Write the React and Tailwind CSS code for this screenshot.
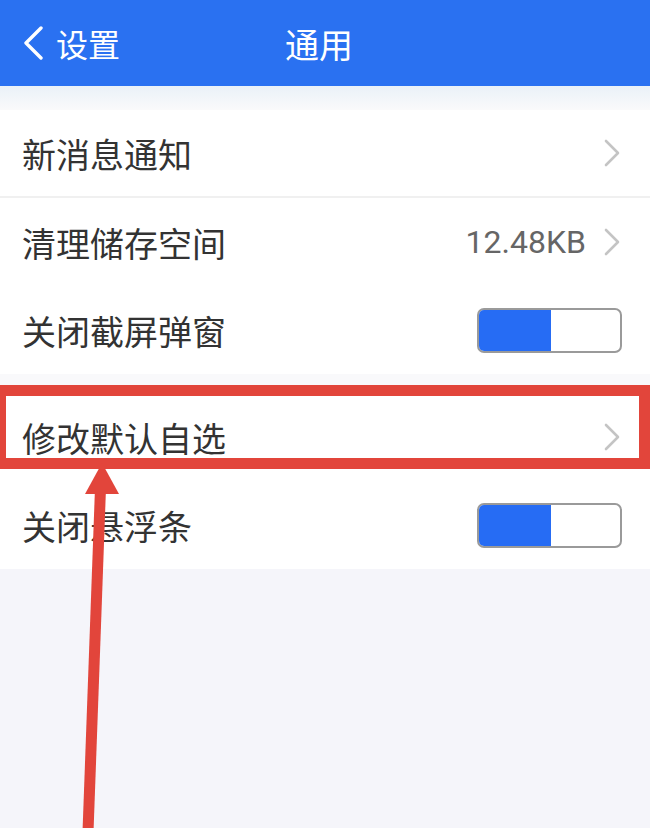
const cjk = { fontFamily: '"Noto Sans CJK SC", "Noto Sans", sans-serif' };

const Chevron = () => (
  <svg width="20" height="30" viewBox="0 0 20 30" fill="none">
    <polyline points="4,3 16,15 4,27" stroke="#c4c4c4" strokeWidth="2.6" strokeLinecap="round" strokeLinejoin="round" />
  </svg>
);

const Toggle = () => (
  <div className="flex h-[45px] w-[145px] overflow-hidden rounded-[7px] border-2 border-[#9a9a9a] bg-white">
    <div className="h-full w-[72px] bg-[#266cf4]" />
  </div>
);

const Row = ({ label, right, divider }) => (
  <div className={`flex h-[88px] items-center justify-between pl-[22px] pr-[28px] ${divider ? 'border-b-2 border-[#f0f0f0]' : ''}`}>
    <span className="text-[34px] text-[#333]" style={cjk}>{label}</span>
    {right}
  </div>
);

export default function App() {
  return (
    <div className="relative min-h-[828px] w-full overflow-hidden bg-[#f5f5fa]">
      <header className="relative flex h-[86px] items-center bg-[#2a71f1] text-white" style={cjk}>
        <div className="flex items-center gap-[12px] pl-[22px]">
          <svg width="22" height="34" viewBox="0 0 22 34" fill="none">
            <polyline points="19,2 4,17 19,32" stroke="white" strokeWidth="3.4" strokeLinecap="round" strokeLinejoin="round" />
          </svg>
          <span className="text-[32px]">设置</span>
        </div>
        <span className="absolute left-[285px] text-[34px]">通用</span>
      </header>

      <div className="h-[24px] bg-gradient-to-b from-[#eaf1f8] to-[#fafafb]" />

      <section className="bg-white">
        <Row label="新消息通知" divider right={<Chevron />} />
        <Row
          label="清理储存空间"
          right={
            <div className="flex items-center gap-[16px]">
              <span className="text-[32px] text-[#666]" style={{ fontFamily: 'Roboto, "Liberation Sans", sans-serif' }}>12.48KB</span>
              <Chevron />
            </div>
          }
        />
        <Row label="关闭截屏弹窗" right={<Toggle />} />
      </section>

      <div className="h-[19px] bg-[#f9f9fb]" />

      <section className="bg-white">
        <Row label="修改默认自选" right={<Chevron />} />
        <Row label="关闭悬浮条" right={<Toggle />} />
      </section>

      {/* red annotation box */}
      <div className="pointer-events-none absolute left-[-5px] top-[385px] h-[84px] w-[655px] border-[11px] border-[#e2453b]" />

      {/* red annotation arrow */}
      <svg className="pointer-events-none absolute left-0 top-0" width="650" height="828" viewBox="0 0 650 828">
        <line x1="100.5" y1="488" x2="88" y2="832" stroke="#e2453b" strokeWidth="11" />
        <polygon points="102,463 85,494 119,494" fill="#e2453b" />
      </svg>
    </div>
  );
}
